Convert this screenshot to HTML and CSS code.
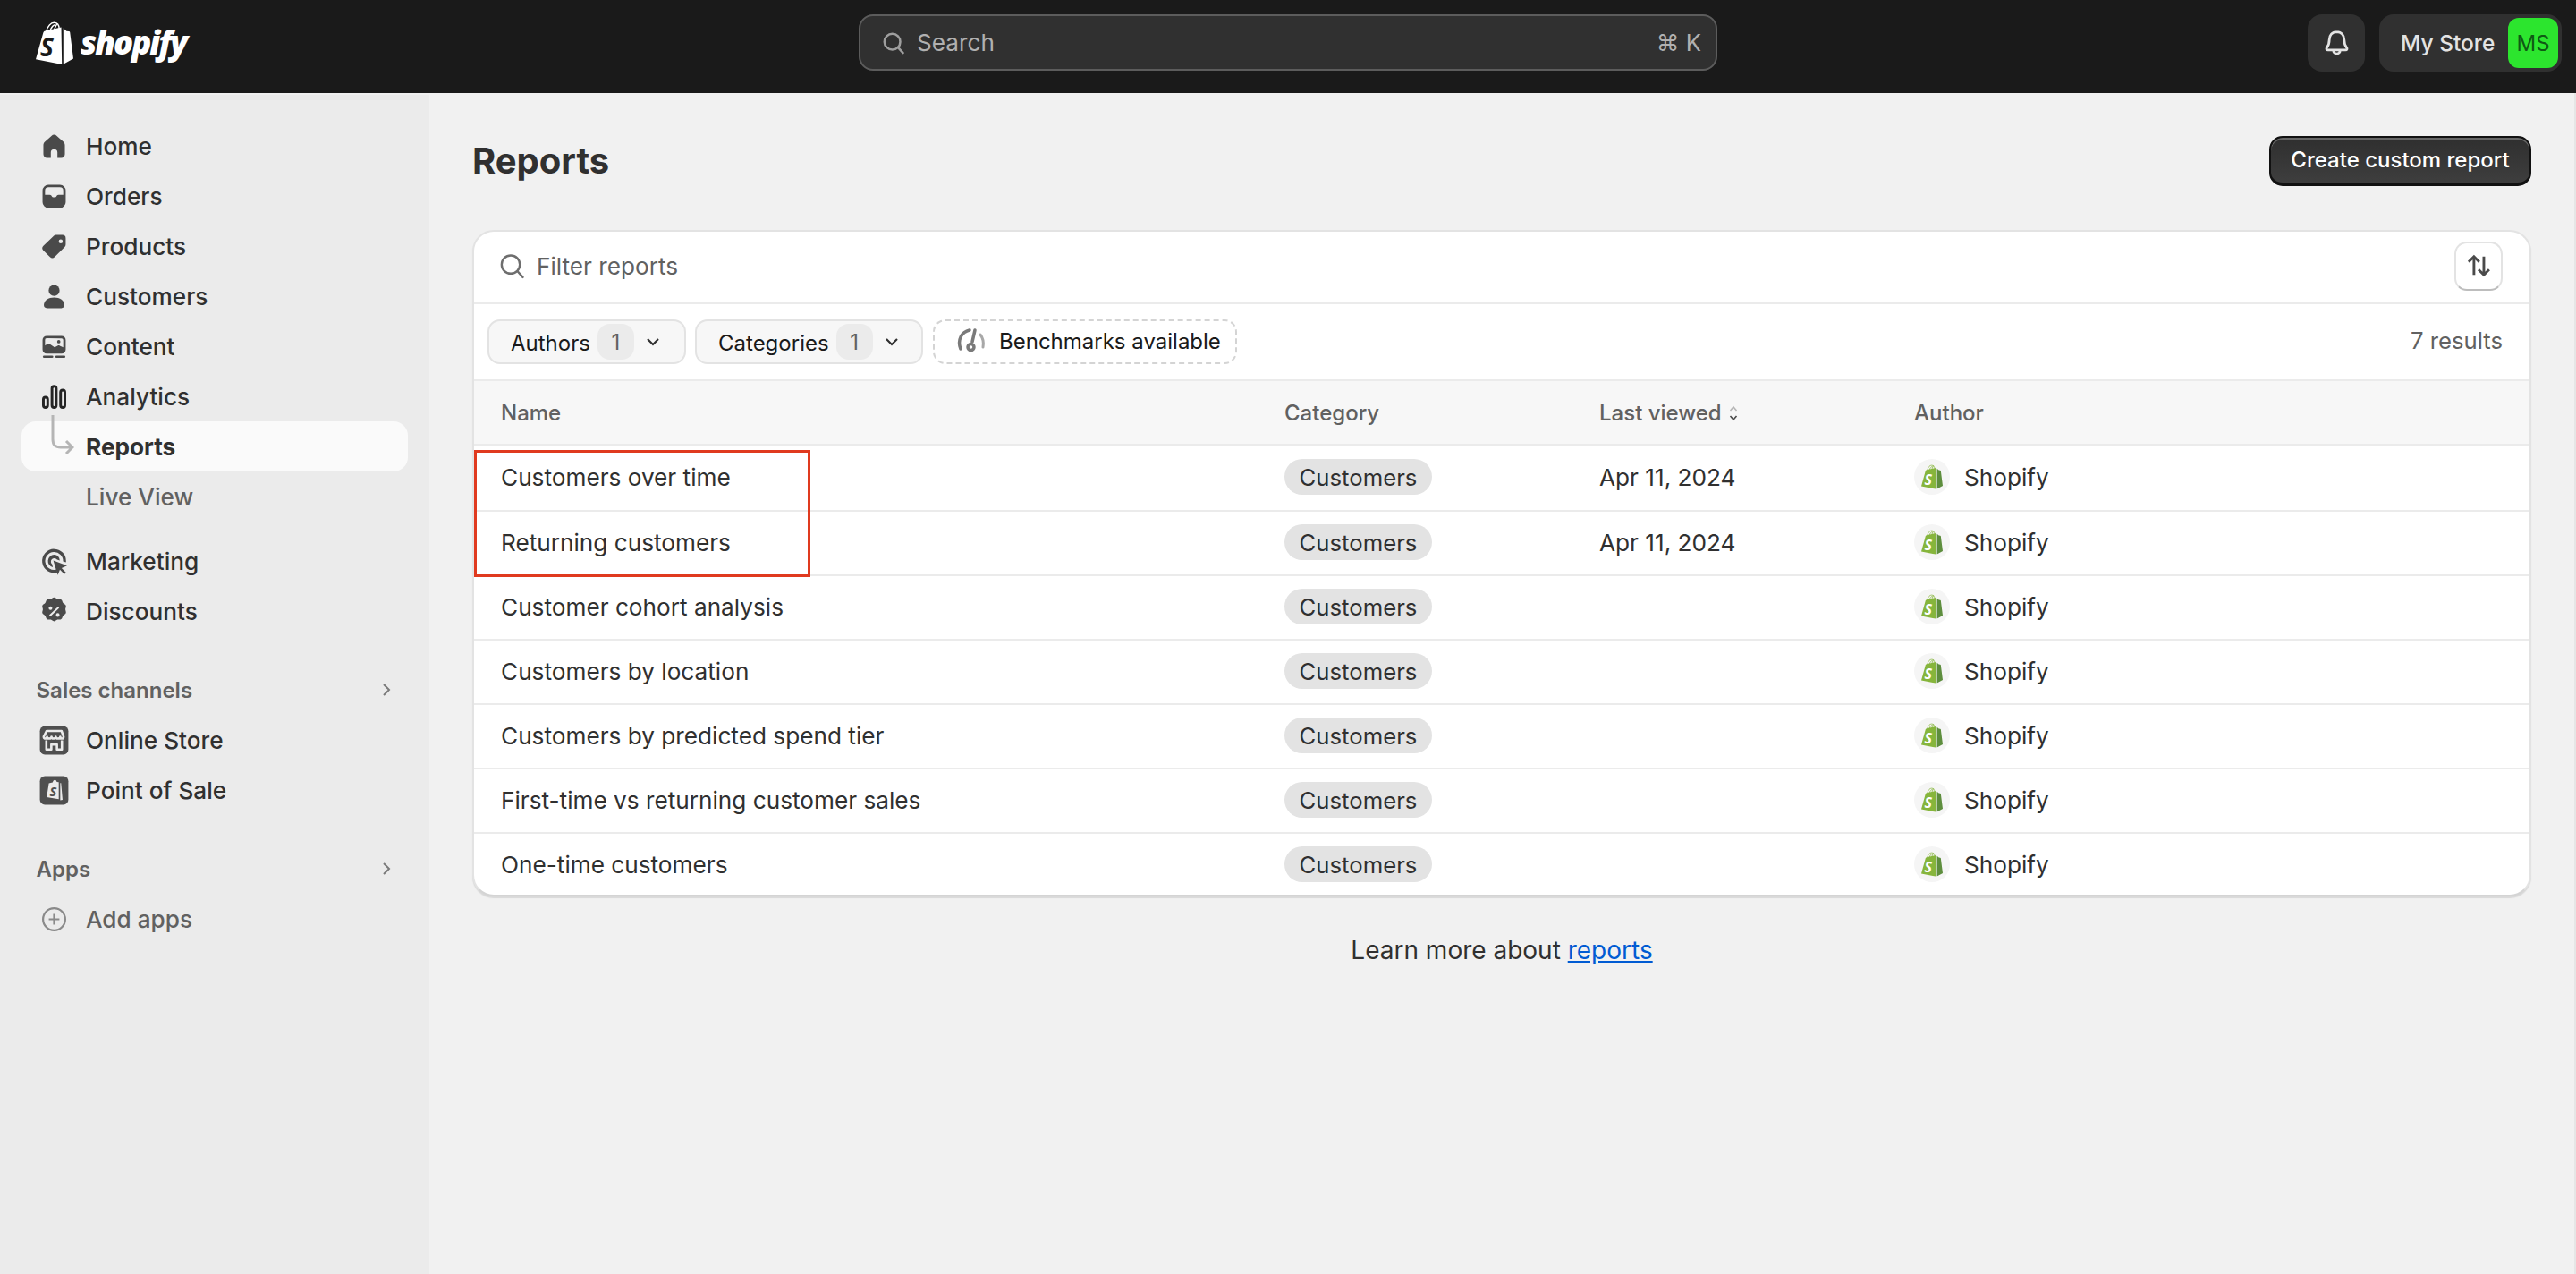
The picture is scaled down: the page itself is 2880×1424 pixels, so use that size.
FILE: index.html
```html
<!DOCTYPE html>
<html lang="en">
<head>
<meta charset="utf-8">
<title>Reports</title>
<link rel="stylesheet" href="styles.css">
</head>
<body>
<svg class="defs" width="0" height="0" aria-hidden="true">
  <symbol id="bag" viewBox="0 0 42 48">
    <path d="M28.5 6.6 10.6 10.4c-1.3.4-2 1-2.3 2.4L0 42.2l29.2 5.7z" fill="currentColor"/>
    <path class="bag-side" d="M30.8 7.6l3.6 3.2 2.7.3c.6.1 1 .4 1.1 1L42 41.6l-11.2 6.2z"/>
    <path d="M11.5 11.5C13 5.5 17 .9 21 1.3c3.500.3 5 3.600 5.200 6.600M16 10c1.500-3.500 3.500-6 6-6.500M20.500 9l3.500-7" fill="none" stroke="currentColor" stroke-width="1.400"/>
  </symbol>
</svg>

<header class="topbar">
  <div class="logo">
    <svg class="logo-bag" width="42" height="48" viewBox="0 0 42 48"><use href="#bag"/><text x="5" y="39" class="bag-s">S</text></svg>
    <span class="wordmark">shopify</span>
  </div>
  <div class="search">
    <svg class="search-icon" viewBox="0 0 20 20" width="34" height="34"><circle cx="9.200" cy="9.200" r="5.200"/><path d="m13 13 3.200 3.500"/></svg>
    <span class="search-label">Search</span>
    <span class="search-key">⌘ K</span>
  </div>
  <div class="top-actions">
    <button class="bell">
      <svg viewBox="0 0 20 20" width="37" height="37"><path d="M10 3c-2.800 0-4.500 2.200-4.500 4.800 0 2.700-.6 3.600-1.500 4.800-.5.7-.2 1.400.7 1.400h10.600c.9 0 1.200-.7.7-1.400-.9-1.200-1.500-2.100-1.500-4.800C14.500 5.200 12.800 3 10 3zM8 14.300a2 2 0 0 0 4 0"/></svg>
    </button>
    <div class="store">
      <span class="store-name">My Store</span>
      <span class="store-avatar">MS</span>
    </div>
  </div>
</header>

<div class="layout">
  <nav class="sidebar">
    <ul class="nav-group">
      <li class="nav-item"><svg class="ico" viewBox="0 0 20 20"><path d="M10 3c-.6 0-1.100.2-1.500.6L4.400 7.300c-.6.500-.9 1.200-.9 2v5.400C3.500 16 4.500 17 5.700 17H8v-3.300a2 2 0 0 1 4 0V17h2.300c1.200 0 2.200-1 2.200-2.300V9.300c0-.8-.3-1.500-.9-2l-4.100-3.700C11.100 3.200 10.600 3 10 3z"/></svg>Home</li>
      <li class="nav-item"><svg class="ico" viewBox="0 0 20 20"><path fill-rule="evenodd" d="M6.500 3h7A3.500 3.500 0 0 1 17 6.500v7a3.500 3.500 0 0 1-3.500 3.500h-7A3.500 3.500 0 0 1 3 13.500v-7A3.500 3.500 0 0 1 6.500 3zm0 1.500a2 2 0 0 0-2 2V9h2.800c.5 0 .8.200 1 .5l.4.600c.2.300.4.400.7.400h1.200c.3 0 .5-.1.700-.4l.4-.6c.2-.3.5-.5 1-.5h2.800V6.500a2 2 0 0 0-2-2z"/></svg>Orders</li>
      <li class="nav-item"><svg class="ico" viewBox="0 0 20 20"><path fill-rule="evenodd" d="M11.200 3H15a2 2 0 0 1 2 2v3.800c0 .6-.2 1.100-.6 1.500l-6.100 6.100a2 2 0 0 1-2.800 0l-4-4a2 2 0 0 1 0-2.800l6.200-6c.4-.4.900-.6 1.500-.6zm2.800 2.700a1.200 1.200 0 1 0 0 2.400 1.200 1.200 0 0 0 0-2.400z"/></svg>Products</li>
      <li class="nav-item"><svg class="ico" viewBox="0 0 20 20"><circle cx="10" cy="6.300" r="3.300"/><path d="M3.800 15.200c0-2.900 2.700-4.700 6.200-4.700s6.200 1.800 6.200 4.700c0 1.100-.8 1.800-1.800 1.800H5.600c-1 0-1.800-.7-1.800-1.800z"/></svg>Customers</li>
      <li class="nav-item"><svg class="ico" viewBox="0 0 20 20"><path fill-rule="evenodd" d="M5.500 3.500h9A2.500 2.500 0 0 1 17 6v5.700a2.500 2.500 0 0 1-2.500 2.500h-9A2.500 2.500 0 0 1 3 11.700V6a2.500 2.500 0 0 1 2.500-2.500zm0 1.400A1 1 0 0 0 4.500 6v3.300l1.300-.9c.5-.3 1-.3 1.500 0l3 2 1.800-1c.4-.2.900-.2 1.300 0l2.100 1V6a1 1 0 0 0-1-1zM12.800 6a1 1 0 1 1 0 2 1 1 0 0 1 0-2z"/><rect x="3.200" y="15.400" width="6.300" height="1.400" rx=".7"/><rect x="10.700" y="15.400" width="6.100" height="1.400" rx=".7"/></svg>Content</li>
      <li class="nav-item nav-current"><svg class="ico ico-bars" viewBox="0 0 20 20"><rect x="3.500" y="10.300" width="2.600" height="6.200" rx="1.300"/><rect x="8.700" y="3.700" width="2.600" height="12.800" rx="1.300"/><rect x="13.900" y="6" width="2.600" height="10.500" rx="1.300"/></svg>Analytics</li>
      <li class="nav-item nav-sub nav-active"><svg class="sub-arrow" viewBox="0 0 26 48" width="26" height="48"><path d="M2 1v27c0 7 3 9 9 9h13M17 30l7 7-7 7"/></svg>Reports</li>
      <li class="nav-item nav-sub nav-muted">Live View</li>
    </ul>
    <ul class="nav-group nav-group-tight">
      <li class="nav-item"><svg class="ico" viewBox="0 0 20 20"><path d="M10 2.500a7.200 7.200 0 1 0 2 14.100l-.5-1.700A5.400 5.400 0 1 1 15.400 10l1.700.5c.1-.2.100-.4.100-.7A7.200 7.200 0 0 0 10 2.500z"/><path d="M10 6a3.800 3.800 0 0 0-.8 7.500l-.4-1.700a2.100 2.100 0 1 1 3-2.900l1.600.5A3.800 3.800 0 0 0 10 6z"/><path d="M9.500 9.500l8.300 3-3.300 1.500 2.700 2.700-1 1-2.700-2.700-1.300 3.300z"/></svg>Marketing</li>
      <li class="nav-item"><svg class="ico" viewBox="0 0 20 20"><path fill-rule="evenodd" d="M10 1.500c.9 0 1.300.8 2 1 .8.200 1.600-.2 2.300.300.7.500.6 1.400 1.100 2 .5.600 1.400.8 1.700 1.600.3.800-.3 1.500-.3 2.300 0 .8.600 1.500.3 2.300-.3.800-1.200 1-1.700 1.600-.5.600-.4 1.500-1.100 2-.7.500-1.500.1-2.300.3-.7.200-1.100 1-2 1s-1.300-.8-2-1c-.8-.2-1.600.2-2.300-.3-.7-.5-.6-1.400-1.100-2-.5-.6-1.400-.8-1.700-1.600-.3-.8.3-1.500.3-2.300 0-.8-.6-1.500-.3-2.300.3-.8 1.200-1 1.700-1.600.5-.6.400-1.500 1.100-2 .7-.5 1.500-.1 2.300-.3.700-.2 1.100-1 2-1zM12.300 7.100l-5.300 5.100.8.800 5.300-5.100zM7.800 6.900a1.100 1.100 0 1 0 0 2.200 1.100 1.100 0 0 0 0-2.200zm4.400 4.100a1.100 1.100 0 1 0 0 2.200 1.100 1.100 0 0 0 0-2.200z"/></svg>Discounts</li>
    </ul>
    <div class="nav-section"><span>Sales channels</span><svg class="chev" viewBox="0 0 10 16" width="10" height="16"><path d="M2 2l6 6-6 6"/></svg></div>
    <ul class="nav-group nav-group-flush">
      <li class="nav-item"><svg class="ico" viewBox="0 0 20 20"><rect x="1.400" y="1.400" width="17.200" height="17.200" rx="3" class="tile"/><path class="tile-line" d="M5.500 4.300h9l1.200 3.500c0 1.500-2 1.500-2 0 0 1.500-2.700 1.500-2.700 0 0 1.500-2.600 1.500-2.600 0 0 1.500-2.700 1.500-2.700 0 0 1.500-2 1.500-2 0zM5.300 10v5.500h3v-3h3.400v3h3V10"/></svg>Online Store</li>
      <li class="nav-item"><svg class="ico" viewBox="0 0 20 20"><rect x="1.400" y="1.400" width="17.200" height="17.200" rx="3" class="tile"/><path class="tile-fill" d="M10.500 3.600c.6 0 1 .6 1.100 1.200l1.200.2v10.300l-7.300-1.300 1.300-8.300 2.300-.5c.2-.9.700-1.600 1.400-1.600zM14.200 5.500l.9 10.200-1.400.3V5.500z"/><text x="7.300" y="13.400" class="pos-s">S</text></svg>Point of Sale</li>
    </ul>
    <div class="nav-section nav-section-apps"><span>Apps</span><svg class="chev" viewBox="0 0 10 16" width="10" height="16"><path d="M2 2l6 6-6 6"/></svg></div>
    <ul class="nav-group nav-group-flush">
      <li class="nav-item nav-muted"><svg class="ico ico-plus" viewBox="0 0 20 20"><circle cx="10" cy="10" r="6.700"/><path d="M10 6.800v6.400M6.800 10h6.400"/></svg>Add apps</li>
    </ul>
  </nav>

  <main class="main">
    <div class="page-head">
      <h1 class="title">Reports</h1>
      <button class="primary">Create custom report</button>
    </div>

    <section class="card">
      <div class="filter-row">
        <svg class="filter-icon" viewBox="0 0 20 20" width="37" height="37"><circle cx="9.200" cy="9" r="5.500"/><path d="m13.200 13 3.300 3.700"/></svg>
        <span class="filter-label">Filter reports</span>
        <button class="sort-btn"><svg viewBox="0 0 20 20" width="34" height="34"><path d="M7 16V4M3.500 7.500 7 4l3.500 3.500M13.500 4v12M10 12.500l3.500 3.500 3.500-3.500"/></svg></button>
      </div>
      <div class="chips-row">
        <div class="chip chip-authors"><span class="chip-text">Authors</span><span class="count">1</span><svg class="chip-chev" viewBox="0 0 16 10" width="16" height="10"><path d="M2 2l6 6 6-6"/></svg></div>
        <div class="chip chip-categories"><span class="chip-text">Categories</span><span class="count">1</span><svg class="chip-chev" viewBox="0 0 16 10" width="16" height="10"><path d="M2 2l6 6 6-6"/></svg></div>
        <div class="chip chip-dashed"><svg class="gauge" viewBox="0 0 34 32" width="34" height="32"><path class="g1" d="M5 25C1 15 6 6 15 4"/><path class="g2" d="M27 9c3 4 4 9 3 14"/><path class="g1" d="M21 4l-3 13"/><circle class="g1" cx="16.500" cy="23" r="3.500"/></svg><span>Benchmarks available</span></div>
        <span class="results">7 results</span>
      </div>
      <div class="row row-head">
        <span>Name</span>
        <span>Category</span>
        <span class="sortable">Last viewed <svg viewBox="0 0 10 20" width="10" height="20"><path class="up" d="M1.500 7 5 3l3.500 4"/><path class="down" d="M1.500 13 5 17l3.500-4"/></svg></span>
        <span>Author</span>
      </div>
      <div class="row row-first">
        <span>Customers over time</span><span><b class="badge">Customers</b></span><span>Apr 11, 2024</span>
        <span class="author"><i class="avatar"><svg width="24" height="28" viewBox="0 0 42 48"><use href="#bag"/><text x="6" y="39" class="bag-s">S</text></svg></i>Shopify</span>
      </div>
      <div class="row">
        <span>Returning customers</span><span><b class="badge">Customers</b></span><span>Apr 11, 2024</span>
        <span class="author"><i class="avatar"><svg width="24" height="28" viewBox="0 0 42 48"><use href="#bag"/><text x="6" y="39" class="bag-s">S</text></svg></i>Shopify</span>
      </div>
      <div class="row">
        <span>Customer cohort analysis</span><span><b class="badge">Customers</b></span><span></span>
        <span class="author"><i class="avatar"><svg width="24" height="28" viewBox="0 0 42 48"><use href="#bag"/><text x="6" y="39" class="bag-s">S</text></svg></i>Shopify</span>
      </div>
      <div class="row">
        <span>Customers by location</span><span><b class="badge">Customers</b></span><span></span>
        <span class="author"><i class="avatar"><svg width="24" height="28" viewBox="0 0 42 48"><use href="#bag"/><text x="6" y="39" class="bag-s">S</text></svg></i>Shopify</span>
      </div>
      <div class="row">
        <span>Customers by predicted spend tier</span><span><b class="badge">Customers</b></span><span></span>
        <span class="author"><i class="avatar"><svg width="24" height="28" viewBox="0 0 42 48"><use href="#bag"/><text x="6" y="39" class="bag-s">S</text></svg></i>Shopify</span>
      </div>
      <div class="row">
        <span>First-time vs returning customer sales</span><span><b class="badge">Customers</b></span><span></span>
        <span class="author"><i class="avatar"><svg width="24" height="28" viewBox="0 0 42 48"><use href="#bag"/><text x="6" y="39" class="bag-s">S</text></svg></i>Shopify</span>
      </div>
      <div class="row row-last">
        <span>One-time customers</span><span><b class="badge">Customers</b></span><span></span>
        <span class="author"><i class="avatar"><svg width="24" height="28" viewBox="0 0 42 48"><use href="#bag"/><text x="6" y="39" class="bag-s">S</text></svg></i>Shopify</span>
      </div>
      <div class="highlight"></div>
    </section>

    <p class="learn">Learn more about <a href="#">reports</a></p>
  </main>
</div>
</body>
</html>
```

FILE: styles.css
```css
* { box-sizing: border-box; }
html, body { margin: 0; height: 100%; }
body {
  display: flex;
  flex-direction: column;
  height: 100vh;
  overflow: hidden;
  font-family: Inter, "Liberation Sans", sans-serif;
  font-size: 26.2px;
  color: #303030;
  background: #f1f1f1;
}
.defs { position: absolute; }
button { font: inherit; padding: 0; cursor: pointer; }
ul { list-style: none; margin: 0; padding: 0; }
.bag-side { fill: var(--bag-side, currentColor); }
.bag-s { font: italic 700 28px "Open Sans", sans-serif; fill: #1a1a1a; }
.avatar .bag-s { fill: #fff; }

/* top bar */
.topbar {
  flex: none;
  height: 104px;
  background: #1a1a1a;
  display: grid;
  grid-template-columns: 920px 960px 1fr;
  align-items: start;
  padding: 16px 16px 0 40px;
}
.logo { display: flex; align-items: flex-start; gap: 8px; color: #fff; padding-top: 8px; }
.logo-bag { display: block; }
.wordmark {
  font: italic 800 36.5px "Open Sans", sans-serif;
  letter-spacing: -2px;
  color: #fff;
  line-height: 46px;
}
.search {
  height: 63px;
  background: #303030;
  border: 2px solid #5c5c5c;
  border-radius: 16px;
  display: flex;
  align-items: center;
  padding: 0 16px 0 20px;
  color: #b0b0b0;
}
.search-icon { fill: none; stroke: #9e9e9e; stroke-width: 1.5; stroke-linecap: round; margin-right: 9px; }
.search-label { flex: 1; }
.search-key { font-size: 25.7px; }
.top-actions { display: flex; gap: 16px; justify-content: flex-end; }
.bell {
  width: 64px; height: 64px; border: 0; border-radius: 16px; background: #303030;
  display: flex; align-items: center; justify-content: center;
}
.bell svg { fill: none; stroke: #e3e3e3; stroke-width: 1.5; stroke-linejoin: round; }
.store {
  width: 204px; height: 64px; border-radius: 16px; background: #303030;
  display: flex; align-items: center; justify-content: space-between;
  padding: 0 4px 0 24px;
  color: #e3e3e3; font-weight: 500; font-size: 24.5px;
}
.store-avatar {
  width: 56px; height: 56px; border-radius: 12px; background: #2ce52e; color: #0f5a14;
  display: flex; align-items: center; justify-content: center; font-weight: 400; font-size: 24px;
}

/* layout */
.layout { flex: 1; display: flex; min-height: 0; }
.sidebar {
  flex: none;
  width: 480px;
  background: #ebebeb;
  border-top: 2px solid #f0f0f0;
  padding: 29px 24px 0;
}
.nav-item {
  position: relative;
  height: 56px;
  display: flex;
  align-items: center;
  padding-left: 17.5px;
  gap: 17.5px;
  font-weight: 500;
  border-radius: 16px;
}
.ico { width: 37px; height: 37px; flex: none; fill: #4a4a4a; }
.ico-bars { fill: none; stroke: #242424; stroke-width: 1.6; }
.ico-plus { fill: none; stroke: #8a8a8a; stroke-width: 1.2; }
.tile { fill: #4f4f4f; }
.tile-line { fill: none; stroke: #ebebeb; stroke-width: 1.4; stroke-linejoin: round; }
.tile-fill { fill: #ebebeb; }
.pos-s { font: italic 700 8px "Open Sans", sans-serif; fill: #4f4f4f; }
.nav-sub { padding-left: 72px; }
.nav-active { background: #fafafa; font-weight: 650; }
.nav-muted { color: #616161; }
.sub-arrow {
  position: absolute;
  left: 33px;
  top: -8px;
  fill: none;
  stroke: #b5b5b5;
  stroke-width: 3;
}
.nav-group-tight { margin-top: 16px; }
.nav-section {
  height: 56px;
  margin-top: 32px;
  padding: 0 16px 0 16.5px;
  display: flex;
  align-items: center;
  justify-content: space-between;
  font-size: 24px;
  font-weight: 600;
  color: #616161;
}
.nav-section .chev { fill: none; stroke: #7a7a7a; stroke-width: 2; margin-right: 3px; }

/* main */
.main {
  flex: 1;
  min-width: 0;
  padding: 48px 48px 0 48px;
  border-right: 2px solid #e6e6e6;
}
.page-head { display: flex; justify-content: space-between; align-items: center; height: 55px; }
.title { margin: 0; font-size: 40px; font-weight: 700; color: #303030; }
.primary {
  width: 293px; height: 56px;
  color: #fff;
  font-size: 24px;
  font-weight: 550;
  border: 2px solid #111;
  border-bottom-width: 4px;
  border-radius: 15px;
  background: linear-gradient(#2f2f2f, #3e3e3e);
  box-shadow: inset 0 2px 0 #666;
}
.card {
  position: relative;
  margin-top: 50px;
  height: 745px;
  background: #fff;
  border: 2px solid #e3e3e3;
  border-bottom-color: #d4d4d4;
  border-radius: 24px;
  box-shadow: 0 2px 1px #d9d9d9;
}
.filter-row {
  height: 81px;
  border-bottom: 2px solid #ebebeb;
  display: flex;
  align-items: center;
  padding: 0 30px 3px 24px;
}
.filter-icon { fill: none; stroke: #6e6e6e; stroke-width: 1.3; stroke-linecap: round; margin-right: 9px; }
.filter-label { flex: 1; color: #616161; }
.sort-btn {
  width: 54px; height: 55px; border-radius: 14px; background: #fff;
  border: 2px solid #e3e3e3; border-bottom-color: #bdbdbd;
  display: flex; align-items: center; justify-content: center;
}
.sort-btn svg { fill: none; stroke: #4a4a4a; stroke-width: 1.7; }
.chips-row {
  height: 86px;
  border-bottom: 2px solid #ebebeb;
  display: flex;
  align-items: center;
  padding: 0 30px 0 15px;
  font-size: 24px;
  color: #1a1a1a;
}
.chip {
  height: 50px;
  border-radius: 14px;
  border: 2px solid #e3e3e3;
  background: #f7f7f7;
  display: flex;
  align-items: center;
  font-weight: 400;
}
.chip-text { padding-top: 2px; }
.chip-authors { width: 222px; padding-left: 24px; margin-right: 10px; }
.chip-categories { width: 255px; padding-left: 24px; margin-right: 11px; }
.chip-dashed {
  width: 340px;
  background: #fff;
  border: 2px dashed #d4d4d4;
  padding: 0 0 2px 24px;
  gap: 14px;
  font-weight: 400;
}
.count {
  width: 41px; height: 40px; margin-left: 8px; border-radius: 14px; background: #ebebeb;
  display: flex; align-items: center; justify-content: center; color: #616161;
}
.chip-chev { margin-left: 13px; fill: none; stroke: #303030; stroke-width: 2.2; }
.gauge { fill: none; stroke-linecap: round; }
.gauge .g1 { stroke: #7a7a7a; stroke-width: 3.5; }
.gauge .g2 { stroke: #a8a8a8; stroke-width: 3; }
.results { margin-left: auto; padding-bottom: 4px; color: #616161; font-size: 25.7px; }
.row {
  display: grid;
  grid-template-columns: 876px 352px 352px 1fr;
  align-items: center;
  height: 72px;
  padding: 0 0 2px 30px;
  border-bottom: 2px solid #ebebeb;
}
.row-head {
  height: 72px;
  padding: 1px 0 0 30px;
  background: #f7f7f7;
  color: #616161;
  font-size: 24px;
  font-weight: 500;
}
.row-first { height: 74px; }
.row-last { height: 68px; padding-bottom: 0; border-bottom: 0; }
.sortable { display: flex; align-items: center; gap: 8px; }
.sortable svg { fill: none; stroke-width: 1.6; }
.sortable .up { stroke: #b5b5b5; }
.sortable .down { stroke: #4a4a4a; }
.badge {
  display: inline-flex;
  align-items: center;
  justify-content: center;
  width: 165px;
  height: 40px;
  border-radius: 20px;
  background: #e3e3e3;
  font-weight: 400;
  font-size: 25.7px;
  color: #303030;
}
.author { display: flex; align-items: center; gap: 16px; }
.avatar {
  --bag-side: #5e8e3e;
  width: 40px; height: 40px; border-radius: 50%; background: #f5f5f5;
  display: flex; align-items: center; justify-content: center;
  color: #86b53c;
}
.highlight {
  position: absolute;
  left: 0;
  top: 244px;
  width: 376px;
  height: 142px;
  border: 3px solid #e03a1f;
}
.learn { margin: 43px 0 0; text-align: center; font-size: 28px; color: #303030; }
.learn a { color: #005bd3; }
```
